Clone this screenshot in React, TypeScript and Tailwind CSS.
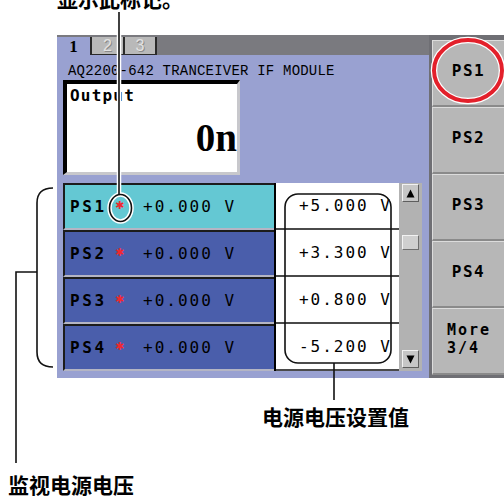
const rows = [
  { name: 'PS1', set: '+5.000 V', active: true },
  { name: 'PS2', set: '+3.300 V', active: false },
  { name: 'PS3', set: '+0.800 V', active: false },
  { name: 'PS4', set: '-5.200 V', active: false },
];

const softkeys = ['PS1', 'PS2', 'PS3', 'PS4'];

function Arrow({ up }: { up: boolean }) {
  return (
    <svg width="9" height="9" viewBox="0 0 9 9">
      <path d={up ? 'M4.5 0.5 L8.5 8.5 L0.5 8.5 Z' : 'M0.5 0.5 L8.5 0.5 L4.5 8.5 Z'} fill="#000" />
    </svg>
  );
}

function Annotations() {
  const halo = { stroke: '#fff', strokeWidth: 4.5, fill: 'none' };
  const ink = { stroke: '#111', strokeWidth: 1.6, fill: 'none' };
  const marked = (
    <>
      <line x1="119" y1="12" x2="119" y2="194.5" />
      <ellipse cx="120.5" cy="208" rx="11" ry="13.5" />
    </>
  );
  return (
    <svg className="absolute inset-0 pointer-events-none" width="504" height="498" viewBox="0 0 504 498">
      <g {...halo}>{marked}</g>
      <g {...ink}>
        {marked}
        <rect x="285" y="194" width="106" height="169" rx="13" />
        <line x1="334" y1="363" x2="334" y2="400" />
        <path d="M53 188 Q37 188 37 203 L37 352 Q37 367 53 367" />
        <path d="M37 272 L16 272 L16 463" />
      </g>
      <ellipse cx="468" cy="70.5" rx="34" ry="30.5" fill="none" stroke="#fff" strokeWidth="6.5" />
      <ellipse cx="468" cy="70.5" rx="34" ry="30.5" fill="none" stroke="#e3202b" strokeWidth="4" />
    </svg>
  );
}

export default function App() {
  return (
    <div className="relative w-[504px] h-[498px] overflow-hidden bg-white text-black">
      <div className="flex h-[35px] flex-col pl-[57px]">
        <p className="-mt-[12px] text-[21px] leading-[21px] font-bold font-['Noto_Sans_CJK_SC',sans-serif]">显示此标记。</p>
      </div>

      <div className="ml-[57px] flex h-[343px] w-[447px]">
        <div className="flex w-[372px] flex-col">
          <div className="flex h-[20px] bg-[#7a7a7f] pt-[2px]">
            <div className="flex w-[33px] items-center justify-center bg-[#99a1d1] font-['Liberation_Serif',serif] text-[17px] font-bold leading-none">1</div>
            <div className="flex w-[33px] items-center justify-center border-l-2 border-b border-[#2a2a2a] bg-[#b9b9b9] font-['Liberation_Sans',sans-serif] text-[16px] leading-none text-[#e2e2e2] [text-shadow:1px_1px_0_#8a8a8a]">2</div>
            <div className="flex w-[34px] items-center justify-center border-l-2 border-r-2 border-b border-[#2a2a2a] bg-[#b9b9b9] font-['Liberation_Sans',sans-serif] text-[16px] leading-none text-[#e2e2e2] [text-shadow:1px_1px_0_#8a8a8a]">3</div>
          </div>

          <div className="flex-1 bg-[#99a1d1] pl-[6px] pt-[8px]">
            <p className="h-[16px] pl-[5px] font-['Liberation_Mono',monospace] text-[14px] leading-[16px] tracking-[0.2px]">AQ2200-642 TRANCEIVER IF MODULE</p>

            <div className="mt-[1px] h-[95px] w-[177px] border-t-4 border-l-4 border-r-[3px] border-b-[3px] border-t-black border-l-black border-r-[#c8c8cc] border-b-[#c8c8cc] bg-white">
              <p className="mt-[3px] pl-[3px] font-['DejaVu_Sans_Mono',monospace] text-[16px] font-bold leading-[18px] tracking-[1.2px]">Output</p>
              <p className="mt-[13px] text-right font-['Liberation_Serif',serif] text-[39px] font-bold leading-[40px]">0n</p>
            </div>

            <div className="mt-[8px] flex">
              <div className="flex flex-col">
                {rows.map((r) => (
                  <div key={r.name} className="flex h-[47px]">
                    <div
                      className={`flex w-[211px] items-center border-t-2 border-l-2 border-b-2 border-t-[#1c1c1c] border-l-[#1c1c1c] border-b-[#b4b5c4] pl-[5px] font-['DejaVu_Sans_Mono',monospace] text-[16px] ${
                        r.active ? 'bg-[#64c8d3]' : 'bg-[#4a5eab]'
                      }`}
                    >
                      <span className="w-[45px] font-bold tracking-[2.6px]">{r.name}</span>
                      <span className="w-[28px] font-['DejaVu_Sans',sans-serif] text-[11px] text-[#f0282e]">✱</span>
                      <span className="whitespace-pre tracking-[2px]">+0.000 V</span>
                    </div>
                    <div className="w-[2px] bg-black" />
                    <div className="flex w-[123px] items-center justify-end border-b-2 border-[#4a4a4a] bg-white pr-[7px] font-['DejaVu_Sans_Mono',monospace] text-[16px] whitespace-pre tracking-[2px]">
                      {r.set}
                    </div>
                  </div>
                ))}
              </div>

              <div className="flex h-[188px] w-[23px] flex-col bg-[#b2b2b2] px-[3px] pt-[1px] pb-[3px]">
                <div className="flex h-[18px] items-center justify-center border-t border-l border-[#f2f2f2] border-r border-b border-r-[#5e5e5e] border-b-[#5e5e5e] bg-[#c6c6c6]">
                  <Arrow up />
                </div>
                <div className="mt-[33px] h-[15px] border-t border-l border-[#f2f2f2] border-r border-b border-r-[#6e6e6e] border-b-[#6e6e6e] bg-[#cfcfcf]" />
                <div className="flex-1" />
                <div className="flex h-[18px] items-center justify-center border-t border-l border-[#f2f2f2] border-r border-b border-r-[#5e5e5e] border-b-[#5e5e5e] bg-[#c6c6c6]">
                  <Arrow up={false} />
                </div>
              </div>
            </div>
          </div>
        </div>

        <div className="flex w-[75px] flex-col bg-[#6f6f74] pl-[3px] pt-[5px]">
          {softkeys.map((k) => (
            <div
              key={k}
              className="flex h-[67px] items-center justify-center border-t border-l border-[#dcdcdc] border-b-2 border-b-[#8a8a8a] bg-[#b7b7b7] pb-[5px] font-['DejaVu_Sans_Mono',monospace] text-[16px] font-bold tracking-[1.5px]"
            >
              {k}
            </div>
          ))}
          <div className="flex h-[67px] flex-col justify-center border-t border-l border-[#dcdcdc] border-b-2 border-b-[#8a8a8a] bg-[#b7b7b7] pb-[5px] pl-[14px] font-['DejaVu_Sans_Mono',monospace] text-[15px] font-bold leading-[18px] tracking-[2px]">
            <span>More</span>
            <span>3/4</span>
          </div>
        </div>
      </div>

      <p className="ml-[262px] mt-[28px] text-[21px] leading-[21px] font-bold font-['Noto_Sans_CJK_SC',sans-serif]">电源电压设置值</p>
      <p className="ml-[8px] mt-[47px] text-[21px] leading-[21px] font-bold font-['Noto_Sans_CJK_SC',sans-serif]">监视电源电压</p>

      <Annotations />
    </div>
  );
}
